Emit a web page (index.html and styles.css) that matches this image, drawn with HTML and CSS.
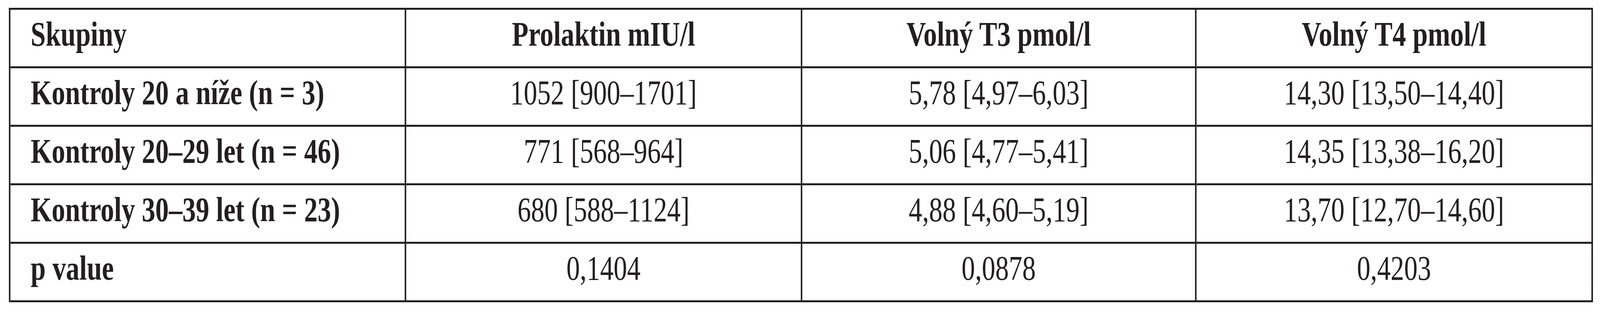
FILE: index.html
```html
<!DOCTYPE html>
<html lang="cs">
<head>
<meta charset="utf-8">
<title>Tabulka</title>
<link rel="stylesheet" href="styles.css">
</head>
<body>
<div class="table">
  <div class="cell head first">Skupiny</div>
  <div class="cell head">Prolaktin mIU/l</div>
  <div class="cell head">Volný T3 pmol/l</div>
  <div class="cell head">Volný T4 pmol/l</div>

  <div class="cell first">Kontroly 20 a níže (n = 3)</div>
  <div class="cell">1052 [900–1701]</div>
  <div class="cell">5,78 [4,97–6,03]</div>
  <div class="cell">14,30 [13,50–14,40]</div>

  <div class="cell first">Kontroly 20–29 let (n = 46)</div>
  <div class="cell">771 [568–964]</div>
  <div class="cell">5,06 [4,77–5,41]</div>
  <div class="cell">14,35 [13,38–16,20]</div>

  <div class="cell first">Kontroly 30–39 let (n = 23)</div>
  <div class="cell">680 [588–1124]</div>
  <div class="cell">4,88 [4,60–5,19]</div>
  <div class="cell">13,70 [12,70–14,60]</div>

  <div class="cell first">p value</div>
  <div class="cell">0,1404</div>
  <div class="cell">0,0878</div>
  <div class="cell">0,4203</div>
</div>
</body>
</html>
```

FILE: styles.css
```css
:root {
  --ink: #231f20;
  --line: 5px;
}

html, body {
  margin: 0;
  padding: 0;
  background: #ffffff;
  overflow: hidden;
}

body {
  font-family: "Liberation Serif", "Times New Roman", serif;
  font-size: 88px;
  line-height: 88px;
  color: var(--ink);
}

/* The table is laid out for a 5219px-wide page and fitted to the
   actual viewport width horizontally. */
.table {
  display: grid;
  grid-template-columns: 1291px 1292px 1286px 1293px;
  grid-auto-rows: 150px;
  width: max-content;
  margin: 20px 0 0 29px;
  border-top: var(--line) solid var(--ink);
  border-left: var(--line) solid var(--ink);
  transform-origin: -29px 0;
  transform: scaleX(tan(atan2(100vw, 5219px)));
}

.cell {
  box-sizing: border-box;
  border-right: var(--line) solid var(--ink);
  border-bottom: var(--line) solid var(--ink);
  padding-top: 19px;
  text-align: center;
  white-space: nowrap;
}

.first {
  text-align: left;
  padding-left: 66px;
  font-weight: bold;
}

.head {
  font-weight: bold;
}
```
